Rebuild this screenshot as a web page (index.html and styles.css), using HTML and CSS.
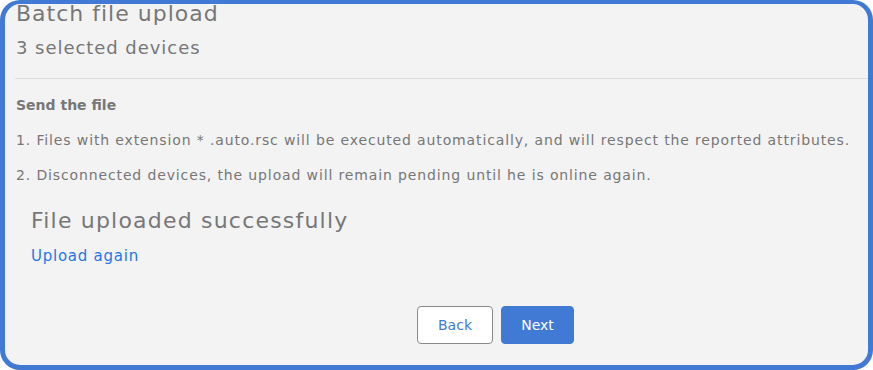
FILE: index.html
```html
<!DOCTYPE html>
<html>
<head>
<meta charset="utf-8">
<link rel="stylesheet" href="styles.css">
</head>
<body>
<div class="frame">
  <div class="header">
    <div class="title">Batch file upload</div>
    <div class="subtitle">3 selected devices</div>
  </div>
  <div class="body">
    <div class="section-title">Send the file</div>
    <p class="note">1. Files with extension * .auto.rsc will be executed automatically, and will respect the reported attributes.</p>
    <p class="note">2. Disconnected devices, the upload will remain pending until he is online again.</p>
    <div class="result">
      <div class="result-title">File uploaded successfully</div>
      <a class="link" href="#">Upload again</a>
    </div>
    <div class="actions">
      <button class="btn btn-outline">Back</button>
      <button class="btn btn-primary">Next</button>
    </div>
  </div>
</div>
</body>
</html>
```
FILE: styles.css
```css
* { box-sizing: border-box; }
html, body { margin: 0; padding: 0; height: 100%; }
body { font-family: "DejaVu Sans", "Noto Sans", sans-serif; color: #777; }
.frame {
  height: 370px;
  width: 873px;
  border: 5px solid #417ad4;
  border-top-width: 4px;
  border-radius: 20px;
  background: #f3f3f3;
  overflow: hidden;
}
.header {
  margin: -5px 0 0 10px;
  padding: 0 0 17px 1px;
  border-bottom: 1px solid #dddddd;
}
.title { font-size: 22px; line-height: 30px; letter-spacing: 1px; }
.subtitle { font-size: 18px; line-height: 26px; margin-top: 6px; letter-spacing: 0.95px; }
.body { padding: 16px 11px 0 11px; }
.section-title { font-size: 14px; font-weight: 700; line-height: 20px; }
.note { font-size: 14px; line-height: 20px; margin: 15px 0 0 0; letter-spacing: 0.87px; }
.result { padding: 21px 15px 0 15px; }
.result-title { font-size: 22px; line-height: 30px; letter-spacing: 1.2px; }
.link { display: inline-block; margin-top: 10px; font-size: 15px; line-height: 20px; color: #1f78e6; text-decoration: none; letter-spacing: 0.75px; }
.actions { display: flex; justify-content: center; gap: 8px; margin-top: 40px; padding-left: 118px; }
.btn { height: 38px; font-family: inherit; font-size: 14px; border-radius: 4px; cursor: pointer; }
.btn-outline { width: 76px; background: #fff; border: 1px solid #888; color: #417ad4; }
.btn-primary { width: 73px; background: #417ad4; border: 1px solid #417ad4; color: #fff; }
```
